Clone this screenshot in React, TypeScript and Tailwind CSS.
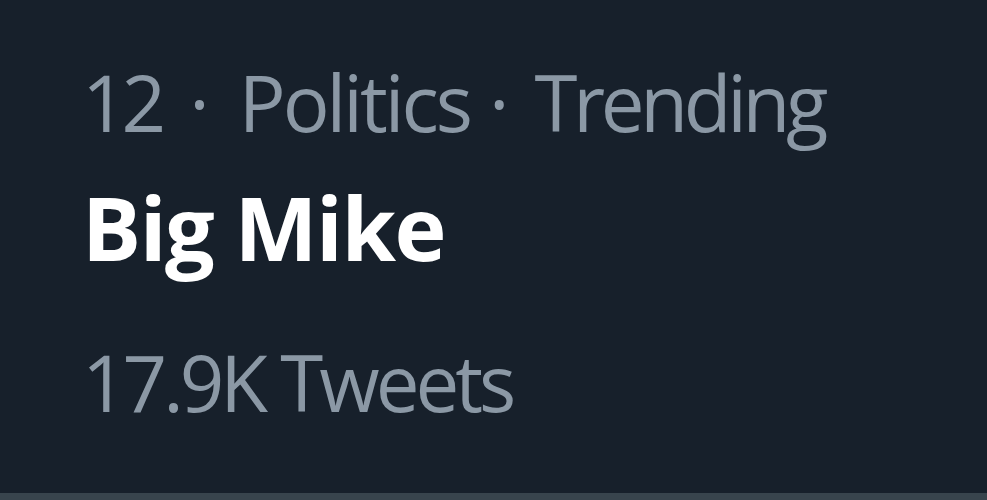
import React from 'react';

const trend = {
  rank: '12',
  category: 'Politics',
  label: 'Trending',
  name: 'Big Mike',
  count: '17.9K Tweets',
};

export default function App() {
  return (
    <div className="w-[987px] h-[500px] bg-[#17202b] flex flex-col overflow-hidden" style={{ fontFamily: '"Open Sans", "Noto Sans", sans-serif' }}>
      <div className="flex-1 pl-[82px] pt-[63px]">
        <div className="flex text-[78px] leading-[78px] text-[#8b98a5] whitespace-nowrap">
          <span className="tracking-[-5px]">{trend.rank}</span>
          <span className="ml-[28px]">·</span>
          <span className="ml-[29px] tracking-[-3px]">{trend.category}</span>
          <span className="ml-[19px]">·</span>
          <span className="ml-[25px] tracking-[-4.3px]">{trend.label}</span>
        </div>
        <p className="mt-[42px] text-[88px] leading-[88px] font-bold text-white whitespace-nowrap tracking-[-1.5px]">{trend.name}</p>
        <p className="mt-[72px] text-[78px] leading-[78px] text-[#8b98a5] whitespace-nowrap tracking-[-4px]">{trend.count}</p>
      </div>
      <div className="h-[7px] bg-[#38444d]" />
    </div>
  );
}
